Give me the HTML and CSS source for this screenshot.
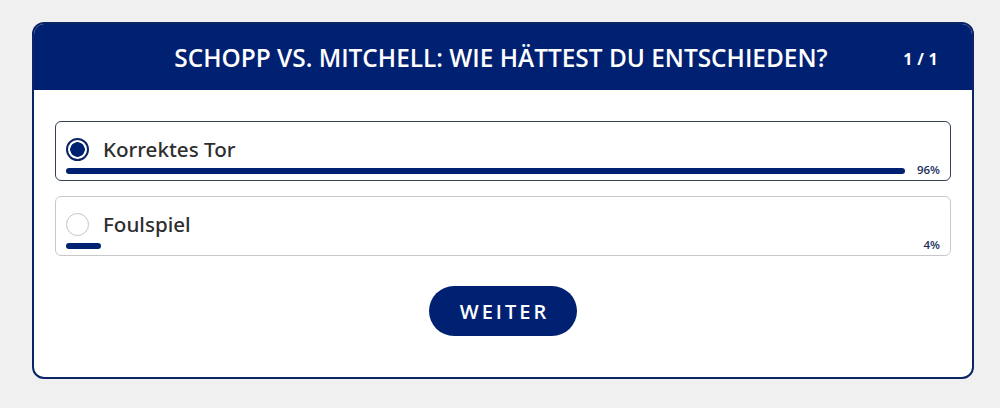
FILE: index.html
```html
<!DOCTYPE html>
<html lang="de">
<head>
<meta charset="utf-8">
<link rel="stylesheet" href="styles.css">
</head>
<body>
<div class="card">
  <div class="header">
    <h1 class="title">SCHOPP VS. MITCHELL: WIE HÄTTEST DU ENTSCHIEDEN?</h1>
    <span class="count">1 / 1</span>
  </div>
  <div class="body">
    <div class="option selected">
      <div class="row"><span class="radio"></span><span class="label">Korrektes Tor</span></div>
      <div class="result">
        <div class="bar" style="width:96%"></div>
        <span class="pct">96%</span>
      </div>
    </div>
    <div class="option">
      <div class="row"><span class="radio"></span><span class="label">Foulspiel</span></div>
      <div class="result">
        <div class="bar" style="width:4%"></div>
        <span class="pct">4%</span>
      </div>
    </div>
    <div class="actions"><button class="btn">WEITER</button></div>
  </div>
</div>
</body>
</html>
```
FILE: styles.css
```css
html, body { margin: 0; padding: 0; }
body {
  background: #f0f0f0;
  font-family: "Open Sans", "Noto Sans", sans-serif;
  width: 1000px;
  height: 408px;
  overflow: hidden;
}
.card {
  margin: 22px 0 0 32px;
  width: 942px;
  box-sizing: border-box;
  border: 2px solid #0a2466;
  border-radius: 12px;
  background: #fff;
  overflow: hidden;
}
.header {
  background: #002172;
  height: 66px;
  display: flex;
  align-items: center;
  position: relative;
  justify-content: center;
}
.title {
  margin: 0;
  color: #fff;
  font-size: 24.4px;
  font-weight: 600;
  letter-spacing: 0;
  padding-right: 4px;
}
.count {
  position: absolute;
  right: 34px;
  top: 24px;
  color: #fff;
  font-size: 16px;
  font-weight: 700;
  letter-spacing: 0.3px;
}
.body {
  padding: 31px 21px 41px 21px;
  display: flex;
  flex-direction: column;
  gap: 15px;
}
.option {
  height: 60px;
  box-sizing: border-box;
  border: 1px solid #c8c8c8;
  border-radius: 6px;
  padding: 15px 10px 0 10px;
}
.option.selected { border-color: #344054; }
.row {
  display: flex;
  align-items: center;
  gap: 14px;
  height: 24px;
}
.radio {
  width: 23px;
  height: 23px;
  box-sizing: border-box;
  border-radius: 50%;
  border: 1.5px solid #c4c4c4;
  background: #fff;
  flex: none;
}
.selected .radio {
  border: 2px solid #0a2466;
  background: radial-gradient(circle, #002172 0 7px, #fff 7.5px);
}
.label {
  font-family: "Noto Sans", "Open Sans", sans-serif;
  font-size: 20.6px;
  color: #2e2e2e;
  font-weight: 500;
}
.result {
  position: relative;
  margin-top: 7px;
  height: 6px;
}
.bar { height: 6px; background: #002172; border-radius: 3px; }
.pct {
  position: absolute;
  right: 0;
  top: -5px;
  font-size: 11.5px;
  line-height: 14px;
  color: #1a2f5e;
  font-weight: 600;
}
.actions {
  display: flex;
  justify-content: center;
  padding-top: 15px;
}
.btn {
  width: 148px;
  height: 50px;
  border: none;
  border-radius: 25px;
  background: #002172;
  color: #fff;
  font-family: "Open Sans", "Noto Sans", sans-serif;
  font-size: 20px;
  font-weight: 600;
  letter-spacing: 3px;
  padding: 0 0 0 3px;
}
```
